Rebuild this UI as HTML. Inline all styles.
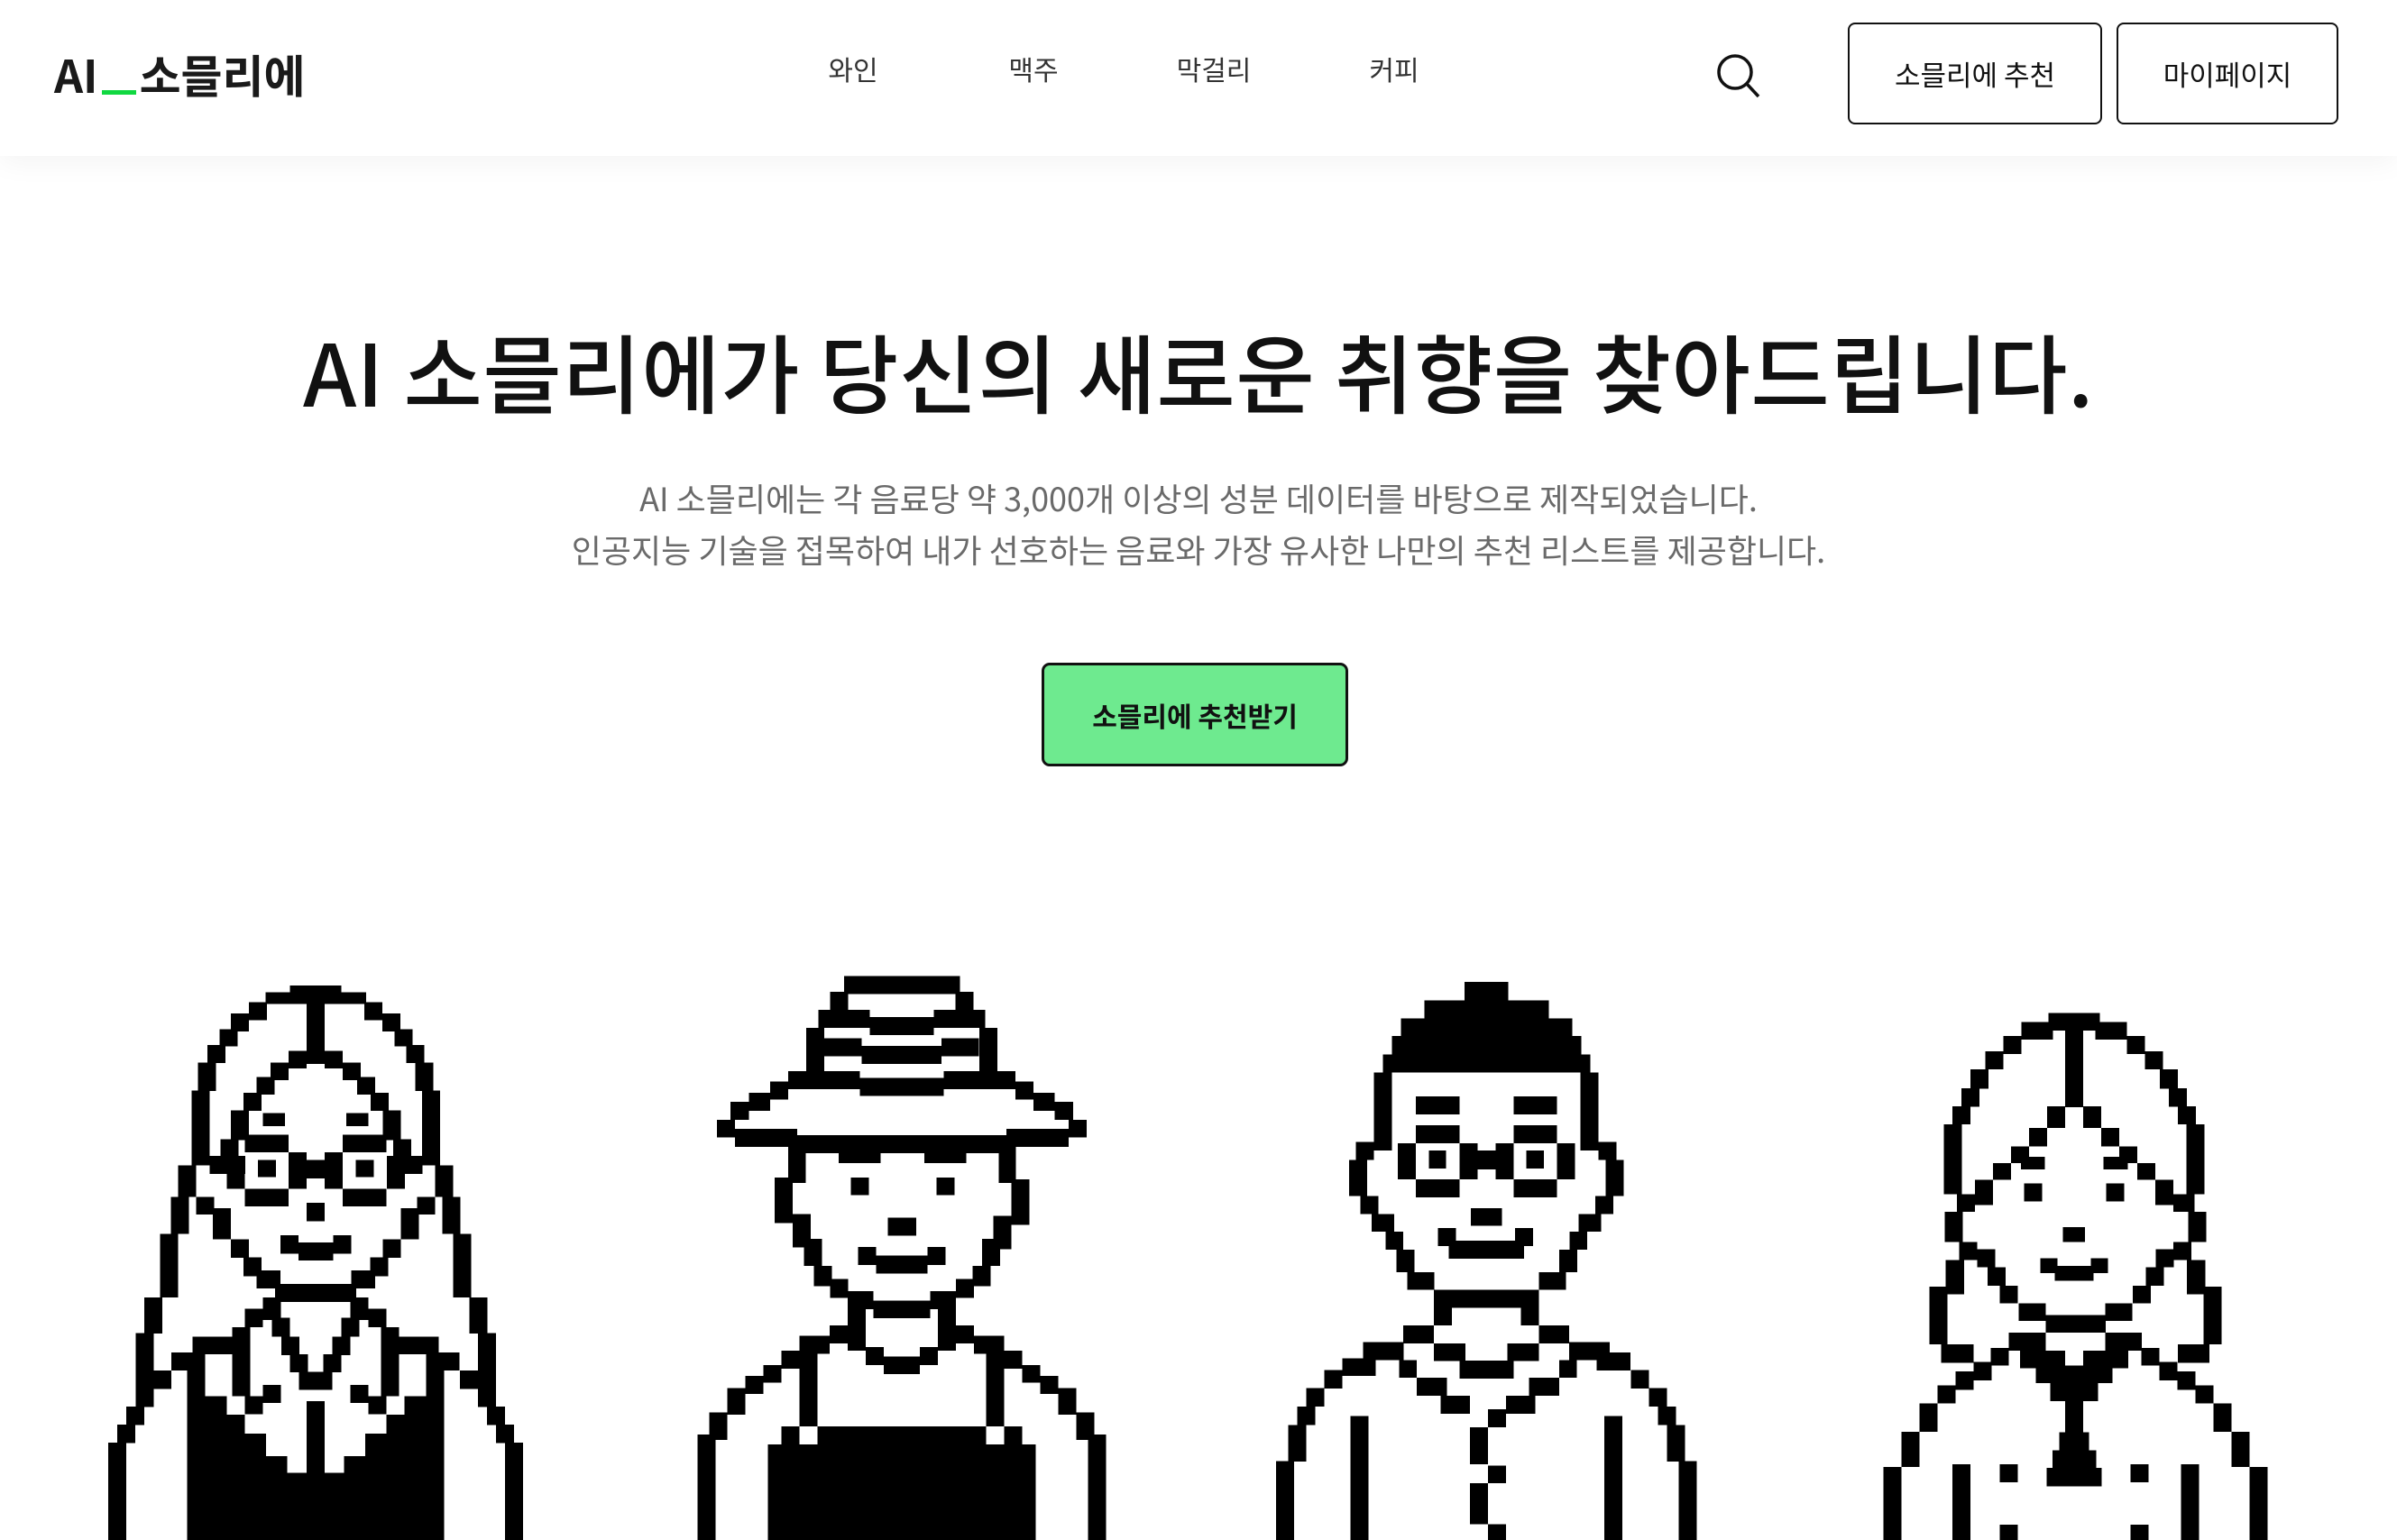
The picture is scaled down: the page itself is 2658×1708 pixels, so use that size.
<!DOCTYPE html>
<html><head><meta charset="utf-8">
<style>
html,body{margin:0;padding:0;width:2658px;height:1708px;overflow:hidden;background:#fff;font-family:"Liberation Sans","Noto Sans CJK KR",sans-serif;}
.hdr{position:absolute;left:0;top:0;width:2658px;height:173px;background:#fff;box-shadow:0 6px 30px rgba(0,0,0,0.05);z-index:2}
.logo{position:absolute;left:60px;top:52px;font-size:50px;font-weight:bold;color:#1a1a1a;letter-spacing:0px;font-family:"Noto Sans CJK KR",sans-serif;line-height:60px}
.logo .u{display:inline-block;width:38px;height:5px;background:#10d840;margin:0 4px;vertical-align:-2px}
.nav{position:absolute;top:54px;font-size:30px;color:#333;width:200px;text-align:center;margin-left:-100px;font-family:"Noto Sans CJK KR",sans-serif}
.btn{position:absolute;top:25px;height:113px;border:2px solid #111;border-radius:8px;box-sizing:border-box;font-size:31px;color:#111;display:flex;align-items:center;justify-content:center;font-family:"Noto Sans CJK KR",sans-serif}
h1{position:absolute;left:0;width:2658px;top:348px;margin:0;text-align:center;font-size:95px;font-weight:500;color:#111;font-family:"Noto Sans CJK KR",sans-serif;line-height:125px;letter-spacing:0.5px}
.sub{position:absolute;left:0;width:2658px;top:524px;text-align:center;font-size:36px;color:#6a6a6a;line-height:57px;font-weight:400;font-family:"Noto Sans CJK KR",sans-serif}
.cta{position:absolute;left:1155px;top:735px;width:340px;height:115px;background:#6eea8f;border:3px solid #111;border-radius:9px;box-sizing:border-box;display:flex;align-items:center;justify-content:center;font-size:30px;font-weight:bold;color:#111;font-family:"Noto Sans CJK KR",sans-serif}
svg.c{position:absolute;shape-rendering:crispEdges}
</style></head><body>
<div class="hdr">
<div class="logo">AI<span class="u"></span>소믈리에</div>
<div class="nav" style="left:946px">와인</div>
<div class="nav" style="left:1146px">맥주</div>
<div class="nav" style="left:1346px">막걸리</div>
<div class="nav" style="left:1546px">커피</div>
<svg style="position:absolute;left:1900px;top:56px" width="56" height="56" viewBox="0 0 56 56"><circle cx="24" cy="24" r="18" fill="none" stroke="#111" stroke-width="3.5"/><line x1="37" y1="37" x2="50" y2="51" stroke="#111" stroke-width="3.5"/></svg>
<div class="btn" style="left:2049px;width:282px">소믈리에 추천</div>
<div class="btn" style="left:2347px;width:246px">마이페이지</div>
</div>
<h1>AI 소믈리에가 당신의 새로운 취향을 찾아드립니다.</h1>
<div class="sub">AI 소믈리에는 각 음료당 약 3,000개 이상의 성분 데이터를 바탕으로 제작되었습니다.<br>인공지능 기술을 접목하여 내가 선호하는 음료와 가장 유사한 나만의 추천 리스트를 제공합니다.</div>
<div class="cta">소믈리에 추천받기</div>

<svg class="c" style="left:100px;top:1060px" width="520" height="648" viewBox="0 0 1560 1568" preserveAspectRatio="none"><g fill="#000">
<rect x="665" y="80" width="170" height="50"/><rect x="583" y="98" width="85" height="32"/><rect x="835" y="98" width="83" height="32"/>
<rect x="528" y="125" width="60" height="48"/><rect x="912" y="125" width="60" height="48"/>
<rect x="468" y="155" width="60" height="48"/><rect x="972" y="155" width="60" height="48"/>
<rect x="430" y="197" width="60" height="46"/><rect x="1012" y="197" width="60" height="46"/>
<rect x="390" y="240" width="60" height="48"/><rect x="1052" y="240" width="60" height="48"/>
<rect x="358" y="287" width="60" height="76"/><rect x="1082" y="287" width="60" height="76"/>
<rect x="338" y="362" width="60" height="200"/><rect x="1104" y="362" width="60" height="200"/>
<rect x="293" y="562" width="60" height="85"/><rect x="1148" y="562" width="60" height="85"/>
<rect x="268" y="647" width="60" height="100"/><rect x="1172" y="647" width="60" height="100"/>
<rect x="233" y="747" width="60" height="170"/><rect x="1208" y="747" width="60" height="170"/>
<rect x="180" y="917" width="60" height="97"/><rect x="1262" y="917" width="60" height="97"/>
<rect x="152" y="1013" width="60" height="150"/><rect x="1290" y="1013" width="60" height="150"/>
<rect x="152" y="1113" width="118" height="50"/><rect x="1230" y="1113" width="60" height="50"/>
<rect x="152" y="1163" width="60" height="48"/><rect x="1290" y="1163" width="60" height="48"/>
<rect x="120" y="1210" width="60" height="50"/><rect x="1320" y="1210" width="60" height="50"/>
<rect x="90" y="1258" width="60" height="50"/><rect x="1350" y="1258" width="60" height="50"/>
<rect x="60" y="1307" width="60" height="640"/><rect x="1380" y="1307" width="60" height="640"/>
<rect x="720" y="125" width="60" height="165"/>
<rect x="660" y="255" width="60" height="47"/><rect x="780" y="255" width="60" height="47"/>
<rect x="600" y="287" width="60" height="47"/><rect x="840" y="287" width="60" height="47"/>
<rect x="553" y="325" width="60" height="48"/><rect x="888" y="325" width="60" height="48"/>
<rect x="510" y="368" width="60" height="48"/><rect x="933" y="368" width="60" height="48"/>
<rect x="468" y="415" width="60" height="80"/><rect x="973" y="415" width="60" height="80"/>
<rect x="433" y="493" width="60" height="45"/><rect x="1008" y="493" width="60" height="45"/>
<rect x="398" y="537" width="118" height="48"/><rect x="987" y="537" width="118" height="48"/>
<rect x="455" y="585" width="60" height="40"/><rect x="987" y="585" width="60" height="40"/>
<rect x="575" y="422" width="73" height="35"/><rect x="852" y="422" width="73" height="35"/>
<rect x="515" y="480" width="145" height="48"/><rect x="840" y="480" width="145" height="48"/>
<rect x="515" y="625" width="145" height="48"/><rect x="840" y="625" width="145" height="48"/>
<rect x="660" y="528" width="60" height="97"/><rect x="780" y="528" width="60" height="97"/><rect x="720" y="548" width="60" height="50"/>
<rect x="558" y="548" width="60" height="46"/><rect x="883" y="548" width="60" height="46"/>
<rect x="720" y="663" width="60" height="50"/>
<rect x="633" y="750" width="60" height="50"/><rect x="808" y="750" width="60" height="50"/><rect x="693" y="770" width="115" height="48"/>
<rect x="353" y="647" width="60" height="47"/><rect x="408" y="678" width="60" height="83"/><rect x="468" y="761" width="60" height="50"/><rect x="510" y="810" width="60" height="50"/><rect x="553" y="845" width="80" height="48"/>
<rect x="1088" y="647" width="60" height="47"/><rect x="1033" y="678" width="60" height="83"/><rect x="973" y="761" width="60" height="50"/><rect x="932" y="810" width="60" height="50"/><rect x="868" y="845" width="80" height="48"/>
<rect x="615" y="881" width="270" height="48"/>
<rect x="575" y="917" width="60" height="60"/><rect x="865" y="917" width="60" height="60"/>
<rect x="515" y="947" width="60" height="50"/><rect x="925" y="947" width="60" height="50"/>
<rect x="605" y="972" width="60" height="50"/><rect x="835" y="972" width="60" height="50"/>
<rect x="636" y="1022" width="60" height="50"/><rect x="805" y="1022" width="60" height="50"/>
<rect x="665" y="1070" width="60" height="48"/><rect x="775" y="1070" width="60" height="48"/>
<rect x="695" y="1117" width="110" height="48"/>
<rect x="473" y="997" width="60" height="185"/><rect x="967" y="997" width="60" height="185"/>
<rect x="340" y="1022" width="135" height="48"/><rect x="1025" y="1022" width="135" height="48"/>
<rect x="270" y="1065" width="112" height="48"/><rect x="1117" y="1065" width="112" height="48"/>
<rect x="322" y="1113" width="60" height="830"/><rect x="1117" y="1113" width="60" height="830"/>
<rect x="322" y="1182" width="133" height="760"/><rect x="1045" y="1182" width="132" height="760"/>
<rect x="455" y="1232" width="60" height="710"/><rect x="985" y="1232" width="60" height="710"/>
<rect x="515" y="1282" width="70" height="660"/><rect x="915" y="1282" width="70" height="660"/>
<rect x="585" y="1343" width="70" height="600"/><rect x="845" y="1343" width="70" height="600"/>
<rect x="655" y="1388" width="190" height="556"/><rect x="720" y="1195" width="60" height="200"/>
<rect x="575" y="1152" width="60" height="48"/><rect x="865" y="1152" width="60" height="48"/>
<rect x="515" y="1182" width="60" height="48"/><rect x="925" y="1182" width="60" height="48"/>
</g></svg>

<svg class="c" style="left:760px;top:1060px" width="480" height="648" viewBox="0 0 1440 1568" preserveAspectRatio="none"><g fill="#000">
<rect x="528" y="55" width="385" height="48"/><rect x="482" y="97" width="60" height="48"/><rect x="898" y="97" width="60" height="48"/>
<rect x="442" y="145" width="172" height="48"/><rect x="826" y="145" width="172" height="48"/><rect x="614" y="165" width="212" height="48"/>
<rect x="402" y="193" width="60" height="165"/><rect x="978" y="193" width="60" height="165"/>
<rect x="462" y="222" width="125" height="48"/><rect x="852" y="222" width="125" height="48"/><rect x="587" y="242" width="265" height="48"/>
<rect x="462" y="310" width="118" height="48"/><rect x="860" y="310" width="118" height="48"/><rect x="580" y="328" width="280" height="48"/>
<rect x="342" y="310" width="60" height="48"/><rect x="1038" y="310" width="60" height="48"/>
<rect x="282" y="338" width="60" height="48"/><rect x="1098" y="338" width="60" height="48"/>
<rect x="212" y="368" width="70" height="48"/><rect x="1158" y="368" width="70" height="48"/>
<rect x="150" y="392" width="62" height="48"/><rect x="1228" y="392" width="62" height="48"/>
<rect x="105" y="440" width="60" height="48"/><rect x="1275" y="440" width="60" height="48"/>
<rect x="165" y="465" width="207" height="48"/><rect x="1068" y="465" width="207" height="48"/><rect x="370" y="482" width="698" height="48"/>
<rect x="510" y="528" width="140" height="28"/><rect x="795" y="528" width="140" height="28"/>
<rect x="342" y="510" width="58" height="100"/><rect x="1042" y="510" width="58" height="100"/>
<rect x="297" y="595" width="60" height="122"/><rect x="1085" y="600" width="60" height="122"/>
<rect x="357" y="693" width="60" height="90"/><rect x="1025" y="698" width="60" height="90"/>
<rect x="395" y="760" width="60" height="72"/><rect x="987" y="760" width="60" height="72"/>
<rect x="428" y="832" width="60" height="55"/><rect x="955" y="832" width="60" height="55"/>
<rect x="482" y="868" width="60" height="50"/><rect x="900" y="868" width="60" height="50"/>
<rect x="540" y="900" width="85" height="48"/><rect x="815" y="900" width="85" height="48"/>
<rect x="550" y="595" width="60" height="48"/><rect x="835" y="595" width="60" height="48"/>
<rect x="673" y="703" width="95" height="48"/>
<rect x="575" y="782" width="60" height="48"/><rect x="805" y="782" width="60" height="48"/><rect x="635" y="805" width="170" height="48"/>
<rect x="625" y="925" width="190" height="48"/><rect x="540" y="900" width="60" height="160"/><rect x="840" y="900" width="60" height="160"/>
<rect x="600" y="1050" width="60" height="48"/><rect x="780" y="1050" width="60" height="48"/><rect x="660" y="1075" width="120" height="48"/>
<rect x="480" y="992" width="60" height="48"/><rect x="900" y="992" width="60" height="48"/>
<rect x="380" y="1020" width="100" height="48"/><rect x="960" y="1020" width="100" height="48"/>
<rect x="320" y="1060" width="60" height="48"/><rect x="1060" y="1060" width="60" height="48"/>
<rect x="260" y="1098" width="60" height="48"/><rect x="1120" y="1098" width="60" height="48"/>
<rect x="200" y="1128" width="60" height="48"/><rect x="1180" y="1128" width="60" height="48"/>
<rect x="140" y="1160" width="60" height="72"/><rect x="1240" y="1160" width="60" height="72"/>
<rect x="80" y="1225" width="60" height="75"/><rect x="1300" y="1225" width="60" height="75"/>
<rect x="40" y="1285" width="60" height="660"/><rect x="1340" y="1285" width="60" height="660"/>
<rect x="380" y="1068" width="60" height="195"/><rect x="1000" y="1068" width="60" height="195"/>
<rect x="320" y="1263" width="60" height="50"/><rect x="1060" y="1263" width="60" height="50"/>
<rect x="440" y="1263" width="560" height="50"/><rect x="275" y="1312" width="890" height="635"/>
</g></svg>

<svg class="c" style="left:1400px;top:1060px" width="500" height="648" viewBox="0 0 1500 1568" preserveAspectRatio="none"><g fill="#000">
<rect x="672" y="70" width="145" height="50"/><rect x="538" y="120" width="415" height="50"/><rect x="460" y="168" width="570" height="50"/>
<rect x="430" y="215" width="630" height="50"/><rect x="400" y="265" width="690" height="48"/>
<rect x="370" y="313" width="60" height="210"/><rect x="1058" y="313" width="60" height="210"/>
<rect x="310" y="500" width="60" height="48"/><rect x="1118" y="500" width="60" height="48"/>
<rect x="288" y="548" width="60" height="97"/><rect x="1142" y="548" width="60" height="97"/>
<rect x="325" y="645" width="60" height="48"/><rect x="1107" y="645" width="60" height="48"/>
<rect x="363" y="693" width="75" height="48"/><rect x="1052" y="693" width="75" height="48"/>
<rect x="410" y="741" width="58" height="48"/><rect x="1022" y="741" width="58" height="48"/>
<rect x="445" y="789" width="60" height="60"/><rect x="987" y="789" width="60" height="60"/>
<rect x="481" y="849" width="90" height="48"/><rect x="920" y="849" width="90" height="48"/>
<rect x="510" y="378" width="145" height="48"/><rect x="835" y="378" width="145" height="48"/>
<rect x="510" y="455" width="145" height="48"/><rect x="835" y="455" width="145" height="48"/>
<rect x="510" y="600" width="145" height="48"/><rect x="835" y="600" width="145" height="48"/>
<rect x="450" y="503" width="60" height="97"/><rect x="980" y="503" width="60" height="97"/>
<rect x="655" y="503" width="60" height="97"/><rect x="775" y="503" width="60" height="97"/><rect x="715" y="523" width="60" height="50"/>
<rect x="553" y="523" width="58" height="48"/><rect x="878" y="523" width="58" height="48"/>
<rect x="693" y="677" width="103" height="48"/>
<rect x="583" y="731" width="60" height="48"/><rect x="840" y="731" width="60" height="48"/><rect x="620" y="765" width="250" height="48"/>
<rect x="570" y="897" width="350" height="48"/><rect x="570" y="897" width="60" height="95"/><rect x="860" y="897" width="60" height="95"/>
<rect x="468" y="992" width="102" height="48"/><rect x="920" y="992" width="100" height="48"/>
<rect x="335" y="1037" width="135" height="48"/><rect x="1020" y="1037" width="135" height="48"/>
<rect x="570" y="1040" width="105" height="48"/><rect x="815" y="1040" width="105" height="48"/><rect x="655" y="1087" width="180" height="48"/>
<rect x="265" y="1080" width="112" height="48"/><rect x="1112" y="1065" width="112" height="48"/>
<rect x="455" y="1085" width="58" height="48"/><rect x="987" y="1085" width="58" height="48"/>
<rect x="513" y="1133" width="100" height="48"/><rect x="887" y="1133" width="100" height="48"/>
<rect x="593" y="1181" width="97" height="48"/><rect x="810" y="1181" width="97" height="48"/><rect x="750" y="1217" width="60" height="48"/>
<rect x="205" y="1112" width="60" height="50"/><rect x="1225" y="1112" width="60" height="50"/>
<rect x="145" y="1160" width="60" height="50"/><rect x="1285" y="1160" width="60" height="50"/>
<rect x="115" y="1210" width="60" height="50"/><rect x="1315" y="1210" width="60" height="50"/>
<rect x="85" y="1260" width="60" height="97"/><rect x="1345" y="1260" width="60" height="97"/>
<rect x="45" y="1356" width="60" height="590"/><rect x="1385" y="1356" width="60" height="590"/>
<rect x="293" y="1235" width="60" height="710"/><rect x="1137" y="1235" width="60" height="710"/>
<rect x="690" y="1265" width="60" height="100"/><rect x="750" y="1368" width="60" height="48"/>
<rect x="690" y="1416" width="60" height="110"/><rect x="750" y="1526" width="60" height="420"/>
</g></svg>

<svg class="c" style="left:2070px;top:1090px" width="460" height="618" viewBox="0 0 1380 1568" preserveAspectRatio="none"><g fill="#000">
<rect x="605" y="85" width="170" height="50"/><rect x="515" y="110" width="105" height="50"/><rect x="760" y="110" width="105" height="50"/>
<rect x="660" y="110" width="60" height="240"/>
<rect x="455" y="150" width="60" height="50"/><rect x="865" y="150" width="60" height="50"/>
<rect x="395" y="193" width="60" height="50"/><rect x="925" y="193" width="60" height="50"/>
<rect x="345" y="243" width="60" height="55"/><rect x="975" y="243" width="60" height="55"/>
<rect x="315" y="297" width="60" height="52"/><rect x="1005" y="297" width="60" height="52"/>
<rect x="285" y="348" width="60" height="50"/><rect x="1035" y="348" width="60" height="50"/>
<rect x="257" y="398" width="60" height="197"/><rect x="1063" y="398" width="60" height="197"/>
<rect x="300" y="595" width="60" height="50"/><rect x="1020" y="595" width="70" height="50"/>
<rect x="260" y="645" width="60" height="85"/><rect x="1070" y="645" width="60" height="85"/>
<rect x="308" y="730" width="60" height="50"/><rect x="1020" y="730" width="60" height="50"/>
<rect x="262" y="780" width="62" height="97"/><rect x="1065" y="780" width="62" height="97"/>
<rect x="208" y="855" width="60" height="162"/><rect x="1120" y="855" width="60" height="162"/>
<rect x="248" y="1017" width="107" height="52"/><rect x="1035" y="1017" width="105" height="52"/>
<rect x="600" y="348" width="60" height="60"/><rect x="720" y="348" width="60" height="60"/>
<rect x="540" y="408" width="60" height="52"/><rect x="780" y="408" width="60" height="52"/>
<rect x="480" y="460" width="60" height="48"/><rect x="840" y="460" width="60" height="48"/>
<rect x="513" y="490" width="80" height="35"/><rect x="788" y="490" width="80" height="35"/>
<rect x="420" y="507" width="60" height="48"/><rect x="900" y="507" width="60" height="48"/>
<rect x="360" y="555" width="60" height="70"/><rect x="960" y="555" width="60" height="70"/>
<rect x="523" y="565" width="60" height="50"/><rect x="797" y="565" width="60" height="50"/>
<rect x="653" y="688" width="73" height="42"/>
<rect x="577" y="775" width="58" height="42"/><rect x="745" y="775" width="58" height="42"/><rect x="625" y="797" width="130" height="42"/>
<rect x="367" y="750" width="60" height="50"/><rect x="962" y="750" width="60" height="50"/>
<rect x="402" y="800" width="60" height="52"/><rect x="928" y="800" width="60" height="52"/>
<rect x="443" y="852" width="60" height="50"/><rect x="885" y="852" width="60" height="50"/>
<rect x="505" y="902" width="90" height="50"/><rect x="793" y="902" width="90" height="50"/>
<rect x="595" y="935" width="200" height="50"/>
<rect x="473" y="985" width="122" height="50"/><rect x="793" y="985" width="122" height="50"/>
<rect x="510" y="1035" width="150" height="50"/><rect x="720" y="1035" width="150" height="50"/>
<rect x="563" y="1077" width="255" height="50"/><rect x="610" y="1127" width="160" height="50"/>
<rect x="660" y="1177" width="60" height="100"/><rect x="640" y="1265" width="100" height="52"/>
<rect x="618" y="1315" width="145" height="52"/><rect x="598" y="1365" width="183" height="52"/>
<rect x="413" y="1027" width="60" height="50"/><rect x="913" y="1027" width="60" height="50"/>
<rect x="355" y="1067" width="60" height="52"/><rect x="973" y="1067" width="60" height="52"/>
<rect x="295" y="1093" width="60" height="52"/><rect x="1033" y="1093" width="60" height="52"/>
<rect x="235" y="1133" width="60" height="50"/><rect x="1093" y="1133" width="60" height="50"/>
<rect x="175" y="1183" width="60" height="80"/><rect x="1153" y="1183" width="60" height="80"/>
<rect x="115" y="1263" width="60" height="100"/><rect x="1213" y="1263" width="60" height="100"/>
<rect x="55" y="1363" width="60" height="500"/><rect x="1273" y="1363" width="60" height="500"/>
<rect x="285" y="1355" width="60" height="500"/><rect x="1045" y="1355" width="60" height="500"/>
<rect x="443" y="1355" width="60" height="50"/><rect x="877" y="1355" width="60" height="50"/>
<rect x="443" y="1525" width="60" height="50"/><rect x="877" y="1525" width="60" height="50"/>
</g></svg>
</body></html>
